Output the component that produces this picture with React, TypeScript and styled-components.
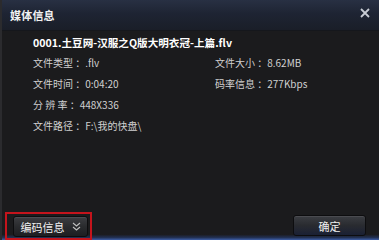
import React from "react";
import styled, { createGlobalStyle } from "styled-components";

const Global = createGlobalStyle`
  html, body { margin: 0; padding: 0; background: #1b1b1d; }
  body { font-family: "Noto Sans CJK SC", "Liberation Sans", sans-serif; }
`;

const Window = styled.div`
  width: 379px;
  height: 240px;
  box-sizing: border-box;
  display: flex;
  flex-direction: column;
  background: #1b1b1d;
  border-left: 2px solid #2b2b2e;
  overflow: hidden;
`;

const TitleBar = styled.div`
  height: 30px;
  flex: none;
  display: flex;
  align-items: center;
  justify-content: space-between;
  padding: 0 9px 0 8px;
  background: linear-gradient(#283043 0%, #1e2433 45%, #1a1e28 100%);
  border-bottom: 1px solid #15171c;
`;

const Title = styled.span`
  color: #f2f2f2;
  font-size: 11px;
  font-weight: 700;
  letter-spacing: 0.2px;
`;

const CloseIcon = styled.svg`
  width: 10px;
  height: 10px;
  margin-top: -4px;
`;

const Body = styled.div`
  flex: 1;
  padding: 3px 0 0 31px;
  color: #d0d0d0;
`;

const FileName = styled.div`
  color: #ffffff;
  font-size: 10.6px;
  font-weight: 700;
  height: 18px;
  line-height: 18px;
`;

const InfoGrid = styled.div`
  display: grid;
  grid-template-columns: 182px auto;
  grid-auto-rows: 21px;
`;

const Item = styled.div<{ $span?: boolean }>`
  font-size: 10px;
  line-height: 21px;
  white-space: pre;
  grid-column: ${(p) => (p.$span ? "1 / span 2" : "auto")};
`;

const Footer = styled.div`
  height: 31px;
  flex: none;
  display: flex;
  align-items: flex-end;
  justify-content: space-between;
  padding: 0 13px 0 3px;
  background: linear-gradient(#1b1b1d 0%, #1b1b1d 82%, #223052 92%, #3e5fa8 100%);
`;

const Highlight = styled.div`
  border: 2px solid #c4141c;
  padding: 2px 2px 1px 6px;
`;

const Button = styled.button<{ $w: number }>`
  width: ${(p) => p.$w}px;
  height: 21px;
  display: flex;
  align-items: center;
  justify-content: center;
  gap: 7px;
  border: 1px solid #0d0d0f;
  border-radius: 3px;
  background: linear-gradient(#3c3d41 0%, #2a2b2e 50%, #1d1e22 100%);
  box-shadow: inset 0 1px 0 #4a4b50;
  color: #f0f0f0;
  font-family: "Noto Sans CJK SC", sans-serif;
  font-size: 11px;
  padding: 0;
`;

const OkButton = styled(Button)`
  margin-bottom: 4px;
  background: linear-gradient(#3b3d42 0%, #292b30 50%, #1a2034 100%);
`;

const Chevron = styled.svg`
  width: 9px;
  height: 9px;
`;

export default function App() {
  return (
    <>
      <Global />
      <Window>
        <TitleBar>
          <Title>媒体信息</Title>
          <CloseIcon viewBox="0 0 10 10">
            <path d="M1 1 L9 9 M9 1 L1 9" stroke="#c8ccd4" strokeWidth="1.8" />
          </CloseIcon>
        </TitleBar>
        <Body>
          <FileName>0001.土豆网-汉服之Q版大明衣冠-上篇.flv</FileName>
          <InfoGrid>
            <Item>文件类型 ：.flv</Item>
            <Item>文件大小 ：8.62MB</Item>
            <Item>文件时间 ：0:04:20</Item>
            <Item>码率信息 ：277Kbps</Item>
            <Item $span>分 辨 率 ：448X336</Item>
            <Item $span>文件路径 ：F:\我的快盘\</Item>
          </InfoGrid>
        </Body>
        <Footer>
          <Highlight>
            <Button $w={75}>
              编码信息
              <Chevron viewBox="0 0 9 9">
                <path d="M1 1 L4.5 4 L8 1 M1 5 L4.5 8 L8 5" stroke="#c0c0c0" strokeWidth="1.1" fill="none" />
              </Chevron>
            </Button>
          </Highlight>
          <OkButton $w={73}>确定</OkButton>
        </Footer>
      </Window>
    </>
  );
}
